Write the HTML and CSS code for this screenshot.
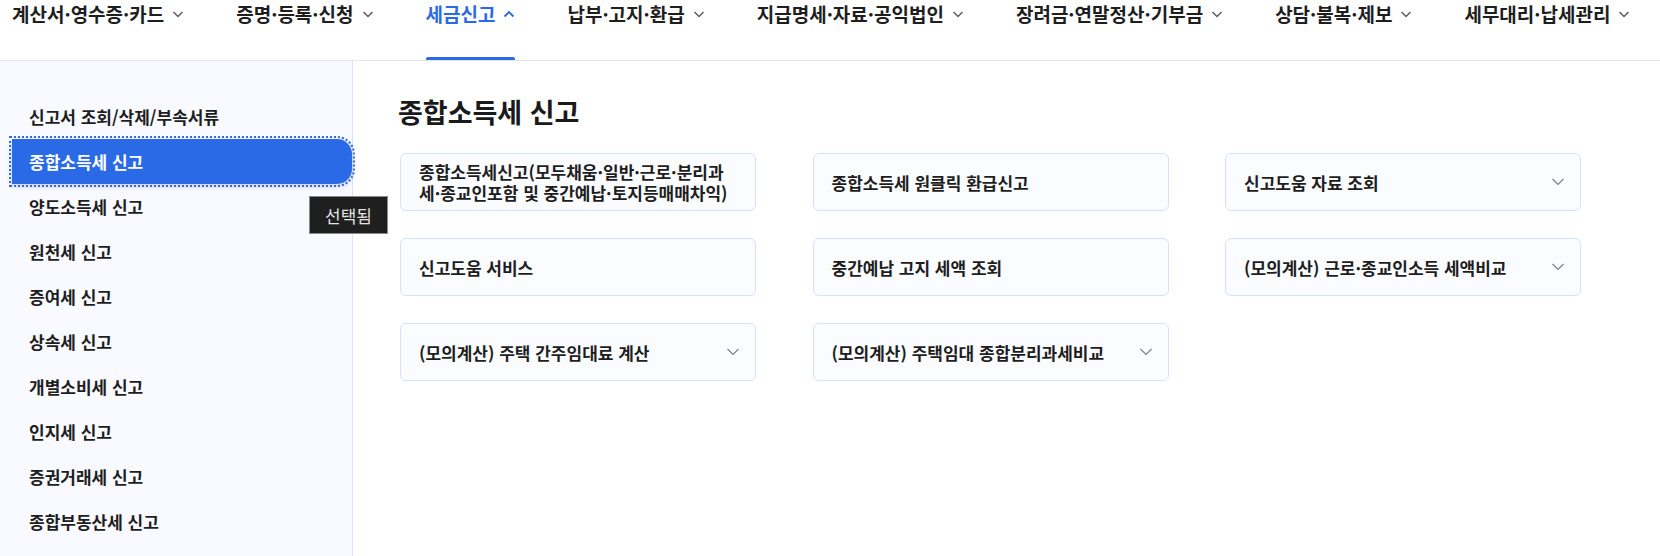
FILE: index.html
```html
<!DOCTYPE html>
<html lang="ko">
<head>
<meta charset="utf-8">
<title>종합소득세 신고</title>
<link rel="stylesheet" href="styles.css">
</head>
<body>
<header class="gnb">
  <ul class="gnb-list">
    <li class="gnb-item"><span>계산서·영수증·카드</span><svg class="chev" viewBox="0 0 12 12"><polyline points="1.5,4 6,8.5 10.5,4"/></svg></li>
    <li class="gnb-item"><span>증명·등록·신청</span><svg class="chev" viewBox="0 0 12 12"><polyline points="1.5,4 6,8.5 10.5,4"/></svg></li>
    <li class="gnb-item is-active"><span>세금신고</span><svg class="chev" viewBox="0 0 12 12"><polyline points="1.5,8.5 6,4 10.5,8.5"/></svg></li>
    <li class="gnb-item"><span>납부·고지·환급</span><svg class="chev" viewBox="0 0 12 12"><polyline points="1.5,4 6,8.5 10.5,4"/></svg></li>
    <li class="gnb-item"><span>지급명세·자료·공익법인</span><svg class="chev" viewBox="0 0 12 12"><polyline points="1.5,4 6,8.5 10.5,4"/></svg></li>
    <li class="gnb-item"><span>장려금·연말정산·기부금</span><svg class="chev" viewBox="0 0 12 12"><polyline points="1.5,4 6,8.5 10.5,4"/></svg></li>
    <li class="gnb-item"><span>상담·불복·제보</span><svg class="chev" viewBox="0 0 12 12"><polyline points="1.5,4 6,8.5 10.5,4"/></svg></li>
    <li class="gnb-item"><span>세무대리·납세관리</span><svg class="chev" viewBox="0 0 12 12"><polyline points="1.5,4 6,8.5 10.5,4"/></svg></li>
  </ul>
</header>
<div class="layout">
  <aside class="lnb">
    <ul class="lnb-list">
      <li class="lnb-item">신고서 조회/삭제/부속서류</li>
      <li class="lnb-item is-active">종합소득세 신고<span class="tooltip">선택됨</span></li>
      <li class="lnb-item">양도소득세 신고</li>
      <li class="lnb-item">원천세 신고</li>
      <li class="lnb-item">증여세 신고</li>
      <li class="lnb-item">상속세 신고</li>
      <li class="lnb-item">개별소비세 신고</li>
      <li class="lnb-item">인지세 신고</li>
      <li class="lnb-item">증권거래세 신고</li>
      <li class="lnb-item">종합부동산세 신고</li>
    </ul>
  </aside>
  <main class="content">
    <h2 class="title">종합소득세 신고</h2>
    <div class="grid">
      <div class="card"><span class="card-text wrap">종합소득세신고(모두채움·일반·근로·분리과세·종교인포함 및 중간예납·토지등매매차익)</span></div>
      <div class="card"><span class="card-text">종합소득세 원클릭 환급신고</span></div>
      <div class="card"><span class="card-text">신고도움 자료 조회</span><svg class="card-chev" viewBox="0 0 12 8"><polyline points="0.5,1 6,6.5 11.5,1"/></svg></div>
      <div class="card"><span class="card-text">신고도움 서비스</span></div>
      <div class="card"><span class="card-text">중간예납 고지 세액 조회</span></div>
      <div class="card"><span class="card-text">(모의계산) 근로·종교인소득 세액비교</span><svg class="card-chev" viewBox="0 0 12 8"><polyline points="0.5,1 6,6.5 11.5,1"/></svg></div>
      <div class="card"><span class="card-text">(모의계산) 주택 간주임대료 계산</span><svg class="card-chev" viewBox="0 0 12 8"><polyline points="0.5,1 6,6.5 11.5,1"/></svg></div>
      <div class="card"><span class="card-text">(모의계산) 주택임대 종합분리과세비교</span><svg class="card-chev" viewBox="0 0 12 8"><polyline points="0.5,1 6,6.5 11.5,1"/></svg></div>
    </div>
  </main>
</div>
</body>
</html>
```
FILE: styles.css
```css
* { box-sizing: border-box; }
html, body { margin: 0; padding: 0; }
body {
  font-family: "Noto Sans CJK KR", "Noto Sans", sans-serif;
  color: #1e1e1e;
  background: #fff;
  width: 1660px;
  height: 556px;
  overflow: hidden;
}
ul { list-style: none; margin: 0; padding: 0; }

/* top navigation */
.gnb {
  height: 61px;
  border-bottom: 1px solid #e6e6e6;
}
.gnb-list {
  display: flex;
  gap: 52px;
  padding-left: 12px;
  height: 60px;
}
.gnb-item {
  position: relative;
  display: flex;
  align-items: flex-start;
  height: 60px;
  font-size: 19px;
  font-weight: 600;
  line-height: 28px;
  color: #1e1e1e;
}
.gnb-item .chev {
  width: 12px;
  height: 12px;
  margin-left: 8px;
  margin-top: 8px;
  fill: none;
  stroke: #5c5c66;
  stroke-width: 1.5;
}
.gnb-item.is-active { color: #2a6ae6; }
.gnb-item.is-active .chev { stroke: #2a6ae6; stroke-width: 1.8; }
.gnb-item.is-active::after {
  content: "";
  position: absolute;
  left: 0;
  right: 0;
  bottom: 0;
  height: 3px;
  border-radius: 2px 2px 0 0;
  background: #2a6ae6;
}

/* layout */
.layout {
  display: flex;
  height: 495px;
}
.lnb {
  width: 353px;
  flex: none;
  background: #f8faff;
  border-right: 1px solid #d8e4fb;
  padding-top: 33px;
}
.lnb-item {
  position: relative;
  height: 45px;
  margin-left: 12px;
  padding-left: 17px;
  display: flex;
  align-items: center;
  font-size: 17px;
  font-weight: 600;
  color: #1e1e1e;
}
.lnb-item.is-active {
  background: #2a6ae6;
  color: #fff;
  border-radius: 0 15px 15px 0;
  box-shadow: 0 2px 6px rgba(0, 0, 0, 0.18);
  outline: 2px dotted #2a6ae6;
  outline-offset: 1px;
}
.tooltip {
  position: absolute;
  left: 297px;
  top: 57px;
  width: 79px;
  height: 38px;
  background: #1f1f1f;
  border: 1px solid #8a8a8a;
  color: #e2e2e2;
  font-size: 17px;
  font-weight: 400;
  display: flex;
  align-items: center;
  justify-content: center;
  z-index: 2;
}

/* content */
.content {
  flex: 1;
  padding: 33px 0 0 47px;
}
.title {
  margin: 0 0 23px -2px;
  font-size: 27px;
  font-weight: 700;
  line-height: 36px;
  color: #1a1a1a;
}
.grid {
  display: grid;
  grid-template-columns: repeat(3, 356px);
  grid-auto-rows: 58px;
  column-gap: 56.5px;
  row-gap: 27px;
}
.card {
  display: flex;
  align-items: center;
  justify-content: space-between;
  padding: 0 16px 0 18px;
  background: #fafcff;
  border: 1px solid #d5e2fa;
  border-radius: 6px;
}
.card-text {
  font-size: 17px;
  font-weight: 600;
  line-height: 21px;
  color: #1e1e1e;
}
.card-text.wrap { max-width: 314px; }
.card-chev {
  width: 12px;
  height: 8px;
  flex: none;
  fill: none;
  stroke: #7c7c86;
  stroke-width: 1.1;
}
```
